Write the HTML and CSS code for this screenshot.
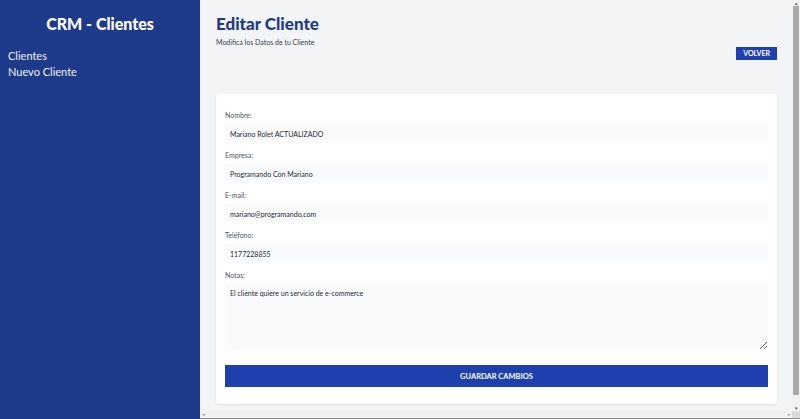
FILE: index.html
```html
<!DOCTYPE html>
<html lang="es">
<head>
<meta charset="utf-8">
<title>CRM - Clientes</title>
<link rel="stylesheet" href="styles.css">
</head>
<body>
<div class="layout">
  <aside class="sidebar">
    <h2 class="brand">CRM - Clientes</h2>
    <nav class="nav">
      <a href="#" class="nav-link">Clientes</a>
      <a href="#" class="nav-link">Nuevo Cliente</a>
    </nav>
  </aside>
  <div class="viewport">
    <div class="viewport-row">
      <main class="main">
        <h1 class="page-title">Editar Cliente</h1>
        <p class="page-sub">Modifica los Datos de tu Cliente</p>
        <div class="actions">
          <button class="btn-back">Volver</button>
        </div>
        <div class="card">
          <form class="form">
            <div class="field">
              <label class="label">Nombre:</label>
              <input class="input" type="text" value="Mariano Rolet ACTUALIZADO">
            </div>
            <div class="field">
              <label class="label">Empresa:</label>
              <input class="input" type="text" value="Programando Con Mariano">
            </div>
            <div class="field">
              <label class="label">E-mail:</label>
              <input class="input" type="email" value="mariano@programando.com">
            </div>
            <div class="field">
              <label class="label">Teléfono:</label>
              <input class="input" type="tel" value="1177228855">
            </div>
            <div class="field">
              <label class="label">Notas:</label>
              <textarea class="input textarea">El cliente quiere un servicio de e-commerce</textarea>
            </div>
            <button type="button" class="btn-save">Guardar Cambios</button>
          </form>
        </div>
      </main>
      <div class="vbar">
        <span class="vbar-arrow">&#9652;</span>
        <span class="vbar-thumb"></span>
        <span class="vbar-arrow">&#9662;</span>
      </div>
    </div>
    <div class="hbar">
      <span class="hbar-arrow">&#9666;</span>
      <span class="hbar-fill"></span>
      <span class="hbar-arrow">&#9656;</span>
      <span class="hbar-corner"></span>
    </div>
  </div>
</div>
</body>
</html>
```
FILE: styles.css
```css
* { box-sizing: border-box; }
html, body { margin: 0; height: 100%; overflow: hidden; }
body {
  font-family: Lato, "Noto Sans", sans-serif;
  color: #374151;
}
.layout { display: flex; height: 100vh; }
.sidebar {
  width: 200px;
  flex: none;
  background: #1e3a8a;
  padding: 13px 8px 0;
}
.brand {
  margin: 0;
  text-align: center;
  color: #fff;
  font-size: 16px;
  font-weight: 900;
  line-height: 22px;
}
.nav { margin-top: 13px; display: flex; flex-direction: column; }
.nav-link {
  color: #f3f4f6;
  text-decoration: none;
  font-size: 11px;
  line-height: 16px;
}
.viewport {
  flex: 1;
  display: flex;
  flex-direction: column;
  min-width: 0;
  border-bottom: 1px solid #8a8a8a;
}
.viewport-row { flex: 1; display: flex; min-height: 0; }
.main {
  flex: 1;
  background: #f3f4f6;
  padding: 13px 15px 0 16px;
  overflow: hidden;
}
.vbar {
  width: 8px;
  flex: none;
  background: #f1f1f1;
  display: flex;
  flex-direction: column;
  align-items: center;
}
.vbar-arrow {
  font-size: 5px;
  line-height: 6px;
  color: #505050;
}
.vbar-thumb {
  flex: 1;
  width: 6px;
  background: #a8a8a8;
  margin: 0 0 10px;
}
.hbar {
  height: 7px;
  flex: none;
  display: flex;
  align-items: center;
  background: #f1f1f1;
}
.hbar-arrow { font-size: 5px; line-height: 7px; color: #a0a0a0; width: 6px; text-align: center; }
.hbar-fill { flex: 1; }
.hbar-corner { width: 8px; height: 7px; background: #dcdcdc; }
.page-title {
  margin: 0;
  color: #1e3a8a;
  font-size: 17px;
  font-weight: 900;
  line-height: 22px;
}
.page-sub {
  margin: 2px 0 0;
  font-size: 7px;
  line-height: 10px;
  color: #374151;
}
.actions { display: flex; justify-content: flex-end; margin-top: 0; }
.btn-back {
  border: 0;
  background: #1e40af;
  color: #fff;
  font-family: inherit;
  font-weight: 700;
  font-size: 7px;
  text-transform: uppercase;
  padding: 0 7px;
  height: 13px;
  line-height: 13px;
}
.card {
  margin-top: 34px;
  background: #fff;
  border-radius: 3px;
  box-shadow: 0 1px 2px rgba(0,0,0,0.08);
  padding: 16px 9px 17px;
}
.form { display: flex; flex-direction: column; }
.field { display: flex; flex-direction: column; margin-bottom: 7px; }
.label {
  font-size: 7px;
  line-height: 10px;
  color: #4b5563;
  margin-bottom: 4px;
}
.input {
  display: block;
  width: 100%;
  height: 19px;
  border: 0;
  background: #f9fafb;
  padding: 0 5px;
  font-family: inherit;
  font-size: 7px;
  color: #1f2937;
}
.textarea {
  height: 66px;
  padding: 5px;
  resize: vertical;
}
.btn-save {
  margin-top: 8px;
  height: 22px;
  border: 0;
  background: #1e40af;
  color: #fff;
  font-family: inherit;
  font-weight: 700;
  font-size: 7.5px;
  text-transform: uppercase;
}
```
